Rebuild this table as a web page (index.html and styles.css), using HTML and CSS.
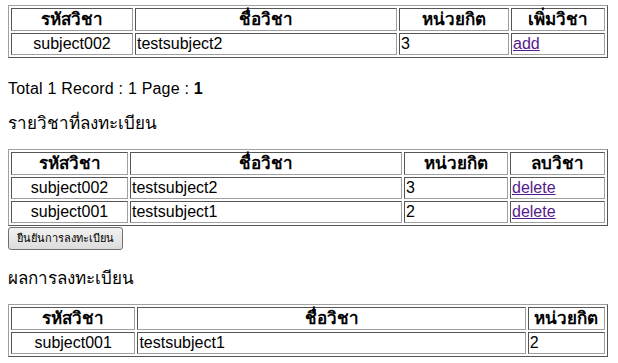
FILE: index.html
```html
<!DOCTYPE html>
<html lang="th">
<head>
    <meta charset="UTF-8">
    <title>ลงทะเบียนรายวิชา</title>
    <link rel="stylesheet" href="styles.css">
</head>
<body>
    <!-- Search result -->
    <table class="grid">
        <tr>
            <th class="w-code1">รหัสวิชา</th>
            <th class="w-name1">ชื่อวิชา</th>
            <th class="w-unit1">หน่วยกิต</th>
            <th class="w-act1">เพิ่มวิชา</th>
        </tr>
        <tr>
            <td class="code">subject002</td>
            <td>testsubject2</td>
            <td>3</td>
            <td><a href="#">add</a></td>
        </tr>
    </table>

    <p class="paging">Total 1 Record : 1 Page : <b>1</b></p>

    <!-- Selected subjects -->
    <p class="section-title">รายวิชาที่ลงทะเบียน</p>
    <table class="grid">
        <tr>
            <th class="w-code2">รหัสวิชา</th>
            <th class="w-name2">ชื่อวิชา</th>
            <th class="w-unit2">หน่วยกิต</th>
            <th class="w-act2">ลบวิชา</th>
        </tr>
        <tr>
            <td class="code">subject002</td>
            <td>testsubject2</td>
            <td>3</td>
            <td><a href="#">delete</a></td>
        </tr>
        <tr>
            <td class="code">subject001</td>
            <td>testsubject1</td>
            <td>2</td>
            <td><a href="#">delete</a></td>
        </tr>
    </table>
    <button type="button" class="confirm">ยืนยันการลงทะเบียน</button>

    <!-- Registration result -->
    <p class="section-title result">ผลการลงทะเบียน</p>
    <table class="grid">
        <tr>
            <th class="w-code3">รหัสวิชา</th>
            <th class="w-name3">ชื่อวิชา</th>
            <th class="w-unit3">หน่วยกิต</th>
        </tr>
        <tr>
            <td class="code">subject001</td>
            <td>testsubject1</td>
            <td>2</td>
        </tr>
    </table>
</body>
</html>
```

FILE: styles.css
```css
body {
    margin: 5px 8px;
    font-family: Tahoma, "Liberation Sans", sans-serif;
    font-size: 16px;
    line-height: 19px;
    color: #000;
    background: #fff;
}

/* old-style border="1" tables */
.grid {
    width: 600px;
    border: 1px solid;
    border-color: #a0a0a0 #555 #555 #a0a0a0;
    border-spacing: 2px;
    table-layout: fixed;
}

.grid th,
.grid td {
    box-sizing: border-box;
    border: 1px solid;
    border-color: #555 #a0a0a0 #a0a0a0 #555;
    padding: 0 1px;
    height: 22px;
    line-height: 20px;
    text-align: left;
}

.grid th {
    height: 23px;
    text-align: center;
    font-weight: bold;
    font-size: 17px;
}

.grid td.code {
    text-align: center;
}

.grid a {
    color: #551a8b;
}

.w-code1 { width: 122px; }
.w-name1 { width: 262px; }
.w-unit1 { width: 110px; }
.w-act1 { width: 94px; }

.w-code2 { width: 117px; }
.w-name2 { width: 272px; }
.w-unit2 { width: 104px; }
.w-act2 { width: 95px; }

.w-code3 { width: 124px; }
.w-name3 { width: 387px; }
.w-unit3 { width: 77px; }

.paging {
    margin: 21px 0 16px;
    letter-spacing: 0.2px;
}

.section-title {
    margin: 16px 0 16px;
    font-size: 17px;
}

.section-title.result {
    margin-top: 19px;
    margin-bottom: 16px;
}

.confirm {
    margin-top: 1px;
    font-family: Tahoma, "Liberation Sans", sans-serif;
    font-size: 11px;
    line-height: 15px;
    padding: 3px 8px;
    border: 1px solid #707070;
    border-radius: 3px;
    background: linear-gradient(#f2f2f2, #dcdcdc);
}
```
